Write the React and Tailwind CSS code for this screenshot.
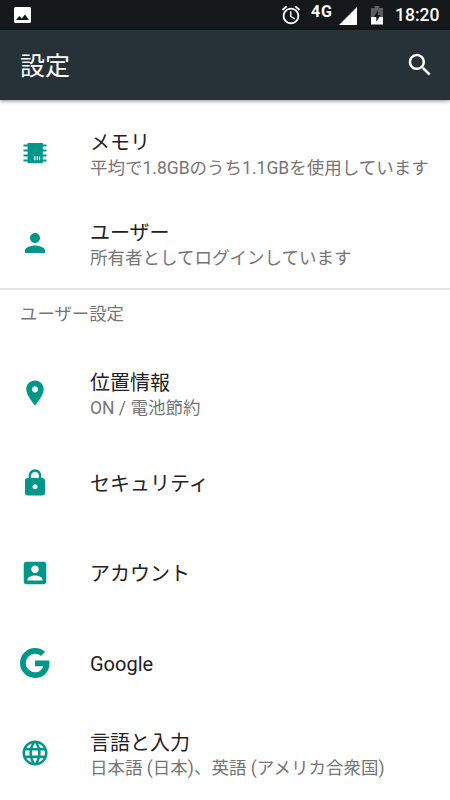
import React from "react";

const PATHS = {
  user: "M12 12c2.21 0 4-1.79 4-4s-1.79-4-4-4-4 1.79-4 4 1.79 4 4 4zm0 2c-2.67 0-8 1.34-8 4v2h16v-2c0-2.66-5.33-4-8-4z",
  place: "M12 2C8.13 2 5 5.13 5 9c0 5.25 7 13 7 13s7-7.75 7-13c0-3.87-3.13-7-7-7zm0 9.5c-1.38 0-2.5-1.12-2.5-2.5s1.12-2.5 2.5-2.5 2.5 1.12 2.5 2.5-1.12 2.5-2.5 2.5z",
  lock: "M18 8h-1V6c0-2.76-2.24-5-5-5S7 3.24 7 6v2H6c-1.1 0-2 .9-2 2v10c0 1.1.9 2 2 2h12c1.1 0 2-.9 2-2V10c0-1.1-.9-2-2-2zm-6 9c-1.1 0-2-.9-2-2s.9-2 2-2 2 .9 2 2-.9 2-2 2zm3.1-9H8.9V6c0-1.71 1.39-3.1 3.1-3.1 1.71 0 3.1 1.39 3.1 3.1v2z",
  account: "M3 5v14c0 1.1.89 2 2 2h14c1.1 0 2-.9 2-2V5c0-1.1-.9-2-2-2H5c-1.11 0-2 .9-2 2zm12 4c0 1.66-1.34 3-3 3s-3-1.34-3-3 1.34-3 3-3 3 1.34 3 3zm-9 8c0-2 4-3.1 6-3.1s6 1.1 6 3.1v1H6v-1z",
  language: "M11.99 2C6.47 2 2 6.48 2 12s4.47 10 9.99 10C17.52 22 22 17.52 22 12S17.52 2 11.99 2zm6.93 6h-2.95c-.32-1.25-.78-2.45-1.38-3.56 1.84.63 3.37 1.91 4.33 3.56zM12 4.04c.83 1.2 1.48 2.53 1.91 3.96h-3.82c.43-1.43 1.08-2.76 1.91-3.96zM4.26 14C4.1 13.36 4 12.69 4 12s.1-1.36.26-2h3.38c-.08.66-.14 1.32-.14 2 0 .68.06 1.34.14 2H4.26zm.82 2h2.95c.32 1.25.78 2.45 1.38 3.56-1.84-.63-3.37-1.9-4.33-3.56zm2.95-8H5.08c.96-1.66 2.49-2.93 4.33-3.56C8.81 5.55 8.35 6.75 8.03 8zM12 19.96c-.83-1.2-1.48-2.53-1.91-3.96h3.82c-.43 1.43-1.08 2.76-1.91 3.96zM14.34 14H9.66c-.09-.66-.16-1.32-.16-2 0-.68.07-1.35.16-2h4.68c.09.65.16 1.32.16 2 0 .68-.07 1.34-.16 2zm.25 5.56c.6-1.11 1.06-2.31 1.38-3.56h2.95c-.96 1.65-2.49 2.93-4.33 3.56zM16.36 14c.08-.66.14-1.32.14-2 0-.68-.06-1.34-.14-2h3.38c.16.64.26 1.31.26 2s-.1 1.36-.26 2h-3.38z",
  alarm: "M22 5.72l-4.6-3.86-1.29 1.53 4.6 3.86L22 5.72zM7.88 3.39L6.6 1.86 2 5.71l1.29 1.53 4.59-3.85zM12.5 8H11v6l4.75 2.85.75-1.23-4-2.37V8zM12 4c-4.97 0-9 4.03-9 9s4.02 9 9 9c4.97 0 9-4.03 9-9s-4.03-9-9-9zm0 16c-3.87 0-7-3.13-7-7s3.13-7 7-7 7 3.13 7 7-3.13 7-7 7z",
  search: "M15.5 14h-.79l-.28-.27C15.41 12.59 16 11.11 16 9.5 16 5.91 13.09 3 9.5 3S3 5.91 3 9.5 5.91 16 9.5 16c1.61 0 3.09-.59 4.23-1.57l.27.28v.79l5 4.99L20.49 19l-4.99-5zm-6 0C7.01 14 5 11.99 5 9.5S7.01 5 9.5 5 14 7.01 14 9.5 11.99 14 9.5 14z",
};

function Icon({ path, className }) {
  return (
    <svg viewBox="0 0 24 24" className={className} fill="currentColor" aria-hidden="true">
      <path d={path} />
    </svg>
  );
}

function MemoryIcon() {
  return (
    <svg viewBox="0 0 30 30" className="size-[30px]" aria-hidden="true">
      <path
        fill="currentColor"
        d="M7.600 5h15.200v1.500h3.700v2h-3.700v3h3.700v2h-3.700v3h3.700v2h-3.700v3h3.700v2h-3.700V25.200H7.600v-1.700H3.500v-2h4.100v-3H3.500v-2h4.100v-3H3.500v-2h4.100v-3H3.500v-2h4.100z"
      />
      <path fill="#fff" opacity=".85" d="M14 18.200h1.500v4H14zM16.600 18.200h1.500v4h-1.500zM19.200 18.200h1v4h-1z" />
    </svg>
  );
}

function GoogleIcon() {
  return (
    <svg viewBox="0 0 30 30" className="size-[30px]" aria-hidden="true">
      <path
        fill="currentColor"
        d="M15 12.500v5.700h8.100c-.8 3.600-3.900 6.100-8 6.100a9.300 9.300 0 1 1 0-18.600c2.300 0 4.300.85 5.900 2.200l4.100-4.100A15 15 0 0 0 15 0a15 15 0 1 0 0 30c8.400 0 14.500-5.900 14.500-15 0-.85-.1-1.700-.3-2.500z"
      />
    </svg>
  );
}

function StatusBar() {
  return (
    <div className="flex h-[30px] items-start bg-[#14181b] pl-[14px] pr-[10px] text-white">
      <svg viewBox="0 0 17 16" className="mt-[7px] h-4 w-[17px]" aria-hidden="true">
        <rect width="17" height="16" rx="1.500" fill="#fff" />
        <path d="M2 13l3.400-4 2.400 2.600L11 7.600 15 13z" fill="#14181b" />
      </svg>
      <div className="ml-auto flex items-start">
        <Icon path={PATHS.alarm} className="mt-1 size-[22px]" />
        <span className="ml-[9px] mt-[2px] w-[22px] text-[16px] font-bold leading-[19px] tracking-[0.8px]">4G</span>
        <svg viewBox="0 0 18 18" className="ml-[6px] mt-[7px] size-[18px]" aria-hidden="true">
          <path d="M0 18L18 0v18z" fill="#fff" />
        </svg>
        <svg viewBox="0 0 12 19" className="ml-[14px] mt-[6px] h-[19px] w-3" aria-hidden="true">
          <path d="M3.500 0h5v2H12v9.500H0V2h3.500z" fill="#5b5e60" />
          <path d="M0 11h12v7.500H0z" fill="#fff" />
          <path d="M7 4v5h2.500L5.300 16v-5H2.800z" fill="#14181b" />
        </svg>
        <span className="ml-[12px] mt-[5px] w-[45px] whitespace-nowrap text-[17.5px] font-medium leading-[21px]">18:20</span>
      </div>
    </div>
  );
}

function Row({ icon, title, summary }) {
  return (
    <li className="flex h-[90px] items-center pl-5">
      <span className="mr-10 size-[30px] shrink-0 text-[#009688]">{icon}</span>
      <div className={summary ? "flex flex-col whitespace-nowrap pt-1.5" : "flex flex-col whitespace-nowrap pt-0.5"}>
        <span className={summary ? "text-[20px] leading-[25px] text-[#212121]" : "text-[20px] leading-[26px] text-[#212121]"}>
          {title}
        </span>
        {summary && <span className="text-[17.5px] leading-[25px] text-[#757575]">{summary}</span>}
      </div>
    </li>
  );
}

export default function App() {
  return (
    <div className="flex h-[800px] w-[450px] flex-col overflow-hidden bg-white font-[Roboto,'Noto_Sans_CJK_JP',sans-serif]">
      <StatusBar />
      <header className="relative flex h-[70px] shrink-0 items-center justify-between bg-[#263238] pl-5 pr-[15px] text-white shadow-[0_1px_4px_rgba(0,0,0,0.45)]">
        <h1 className="pt-1 text-[25px] leading-[30px]">設定</h1>
        <Icon path={PATHS.search} className="size-[30px]" />
      </header>
      <main className="pt-2">
        <ul>
          <Row icon={<MemoryIcon />} title="メモリ" summary="平均で1.8GBのうち1.1GBを使用しています" />
          <Row icon={<Icon path={PATHS.user} className="size-[30px]" />} title="ユーザー" summary="所有者としてログインしています" />
        </ul>
        <h2 className="h-[60px] border-t-2 border-[#e5e5e5] pl-5 pt-[11px] text-[17.4px] leading-[26px] text-[#757575]">
          ユーザー設定
        </h2>
        <ul>
          <Row icon={<Icon path={PATHS.place} className="size-[30px]" />} title="位置情報" summary="ON / 電池節約" />
          <Row icon={<Icon path={PATHS.lock} className="size-[30px]" />} title="セキュリティ" />
          <Row icon={<Icon path={PATHS.account} className="size-[30px]" />} title="アカウント" />
          <Row icon={<GoogleIcon />} title="Google" />
          <Row icon={<Icon path={PATHS.language} className="size-[30px]" />} title="言語と入力" summary="日本語 (日本)、英語 (アメリカ合衆国)" />
        </ul>
      </main>
    </div>
  );
}
